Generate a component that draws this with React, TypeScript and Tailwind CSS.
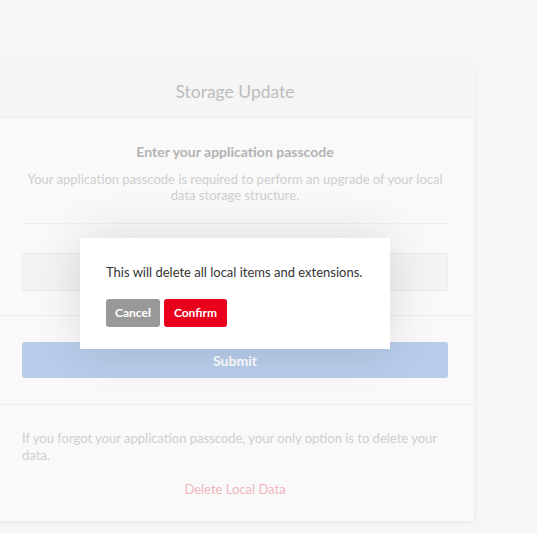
import React from 'react';

const FONT = { fontFamily: 'Lato, "Open Sans", sans-serif' };

function StorageCard() {
  return (
    <div className="ml-[-4px] mt-[66px] w-[478px] bg-[#f9f9f9] rounded-[3px] shadow-[0_1px_6px_rgba(0,0,0,0.06)]">
      {/* Header */}
      <div className="h-[52px] pt-[2px] flex items-center justify-center bg-[#f5f5f5] border-b border-[#ececec] rounded-t-[3px]">
        <h1 className="text-[17.5px] text-[#bdbdbd]">Storage Update</h1>
      </div>

      {/* Passcode form */}
      <div className="px-[26px] pt-[24px] pb-[24px] border-b border-[#eeeeee]">
        <div className="text-center">
          <div className="text-[14px] font-bold text-[#b3b3b3] leading-[20px]">Enter your application passcode</div>
          <p className="mt-[9px] text-[13px] leading-[16px] text-[#cfcfcf]">
            Your application passcode is required to perform an upgrade of your local data storage structure.
          </p>
        </div>
        <div className="mt-[20px] border-t border-[#efefef]" />
        <div className="mt-[29px] h-[38px] rounded-[3px] bg-[#f3f3f3] border border-[#ececec]" />
      </div>

      {/* Submit */}
      <div className="px-[26px] pt-[26px] pb-[26px] border-b border-[#eeeeee]">
        <button className="w-full h-[36px] rounded-[3px] bg-[#b8cdea] text-white text-[14px] font-bold">Submit</button>
      </div>

      {/* Footer */}
      <div className="px-[26px] pt-[25px] pb-[21px]">
        <p className="text-[13px] leading-[17px] text-[#cfcfcf]">
          If you forgot your application passcode, your only option is to delete your data.
        </p>
        <div className="mt-[16px] text-center text-[13px] text-[#f0b7bf]">Delete Local Data</div>
      </div>
    </div>
  );
}

function ConfirmDialog() {
  return (
    <div className="absolute left-[80px] top-[238px] w-[310px] h-[111px] bg-white shadow-[0_0_50px_rgba(0,0,0,0.13)] px-[26px] pt-[25px]">
      <p className="text-[13px] leading-[18px] text-[#333333] whitespace-nowrap">This will delete all local items and extensions.</p>
      <div className="mt-[18px] flex gap-[4px]">
        <button className="h-[28px] px-[9px] rounded-[3px] bg-[#999999] text-white text-[12px] font-bold">Cancel</button>
        <button className="h-[28px] px-[10px] rounded-[3px] bg-[#e8001c] text-white text-[12px] font-bold">Confirm</button>
      </div>
    </div>
  );
}

export default function App() {
  return (
    <div className="relative w-[537px] h-[533px] overflow-hidden bg-[#f6f6f6]" style={FONT}>
      <StorageCard />
      <ConfirmDialog />
    </div>
  );
}
